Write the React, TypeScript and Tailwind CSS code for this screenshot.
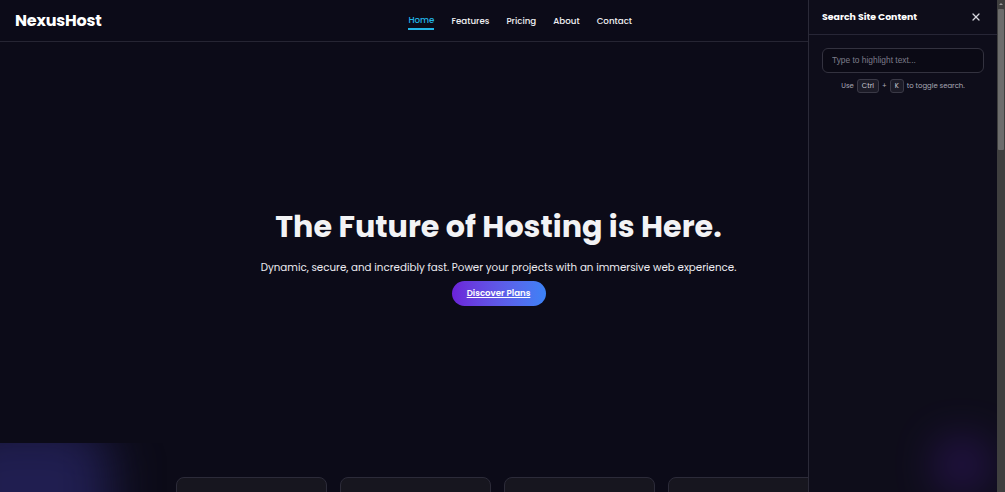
import { X, Search } from 'lucide-react';

const navLinks = ['Home', 'Features', 'Pricing', 'About', 'Contact'];

const features = [
  { title: 'Blazing Speed', text: 'NVMe storage and edge caching keep every request quick.' },
  { title: 'Ironclad Security', text: 'Free SSL, DDoS shielding and daily backups included.' },
  { title: 'Global Network', text: 'Deploy close to your users across 30+ regions.' },
  { title: '24/7 Support', text: 'Real engineers ready to help at any hour.' },
];

const font = { fontFamily: 'Poppins, Inter, "Noto Sans", sans-serif' };

export default function App() {
  return (
    <div style={font} className="flex h-screen overflow-hidden bg-[#0c0b18] text-white">
      <div className="relative min-w-0 flex-1 overflow-hidden">
        {/* header */}
        <header className="flex h-[42px] items-center justify-between border-b border-[#262533] px-[15px]">
          <a className="text-[16px] font-bold tracking-[-0.2px] text-white">NexusHost</a>
          <nav className="ml-[-2px] flex items-center gap-[17px] text-[8.7px] font-medium">
            {navLinks.map((link) => (
              <a
                key={link}
                className={
                  link === 'Home'
                    ? 'border-b-2 border-[#22b5e6] pb-[1px] pt-[3px] text-[#22b5e6]'
                    : 'pb-[1px] pt-[3px] text-[#f1f1f4]'
                }
              >
                {link}
              </a>
            ))}
          </nav>
          <button className="flex h-[28px] w-[41px] items-center justify-center rounded-md text-white">
            <Search size={16} />
          </button>
        </header>

        {/* hero */}
        <section className="flex h-[401px] flex-col items-center justify-center pt-[28px] text-center">
          <h1 className="text-[30.2px] font-bold leading-[40px] text-[#f3f3f5]">
            The Future of Hosting is Here.
          </h1>
          <p className="mt-[13px] text-[10.3px] leading-[16px] text-[#ececf1]">
            Dynamic, secure, and incredibly fast. Power your projects with an immersive web experience.
          </p>
          <a className="mt-[5px] flex h-[25px] w-[94px] items-center justify-center rounded-full bg-gradient-to-r from-[#6b21d8] to-[#3b82f6] text-[8.6px] font-semibold text-white underline">
            Discover Plans
          </a>
        </section>

        {/* features */}
        <section className="relative overflow-hidden pb-24 pt-[34px]">
          <div className="absolute -left-[50px] top-[-20px] h-[220px] w-[160px] rounded-[40px] bg-[#201e50] blur-xl" />
          <div className="relative mx-auto grid w-[644px] -translate-x-[1px] grid-cols-4 gap-[13px]">
            {features.map((f) => (
              <div
                key={f.title}
                className="h-[200px] rounded-lg border border-[#2c2b39] bg-[#17161f] p-4"
              >
                <h3 className="mt-6 text-sm font-semibold">{f.title}</h3>
                <p className="mt-2 text-xs text-[#a5a4b4]">{f.text}</p>
              </div>
            ))}
          </div>
        </section>

        {/* search drawer */}
        <aside className="absolute bottom-0 right-0 top-0 flex w-[189px] flex-col overflow-hidden border-l border-[#2b2a38] bg-[#0e0d1a]">
          <div className="absolute bottom-[7px] right-[15px] h-[40px] w-[40px] rounded-full bg-[#5b21b6] opacity-60 blur-xl" />
          <div className="flex h-[35px] items-center justify-between border-b border-[#272636] pl-[13px] pr-[15px]">
            <h2 className="text-[9.4px] font-bold text-white">Search Site Content</h2>
            <X size={12} strokeWidth={2.5} className="text-[#d6d6de]" />
          </div>
          <div className="relative px-[13px] pt-[11px]">
            <input
              placeholder="Type to highlight text..."
              className="h-[25px] w-full rounded-md border border-[#33323f] bg-[#0b0a15] px-[9px] text-[8.4px] text-white placeholder:text-[#7d7c8a]"
              style={{ fontFamily: '"Liberation Sans", Arial, sans-serif' }}
            />
            <p className="mt-[6px] flex items-center justify-center gap-[3px] text-[6.9px] text-[#a9a8b6]">
              Use
              <kbd className="rounded-[3px] border border-[#3a3946] bg-[#1c1b27] px-[4px] py-[1px] text-[6.9px] text-[#c8c7d2]" style={font}>
                Ctrl
              </kbd>
              +
              <kbd className="rounded-[3px] border border-[#3a3946] bg-[#1c1b27] px-[4px] py-[1px] text-[6.9px] text-[#c8c7d2]" style={font}>
                K
              </kbd>
              to toggle search.
            </p>
          </div>
        </aside>
      </div>

      {/* page scrollbar */}
      <div className="flex w-2 flex-col items-center bg-[#3f3f3f]">
        <svg width="6" height="6" viewBox="0 0 6 6" className="mt-[1px]">
          <path d="M1 4 L3 2 L5 4 Z" fill="#9a9a9a" />
        </svg>
        <div className="mt-[2px] h-[141px] w-[6px] rounded-[1px] bg-[#6c6c6c]" />
      </div>
    </div>
  );
}
